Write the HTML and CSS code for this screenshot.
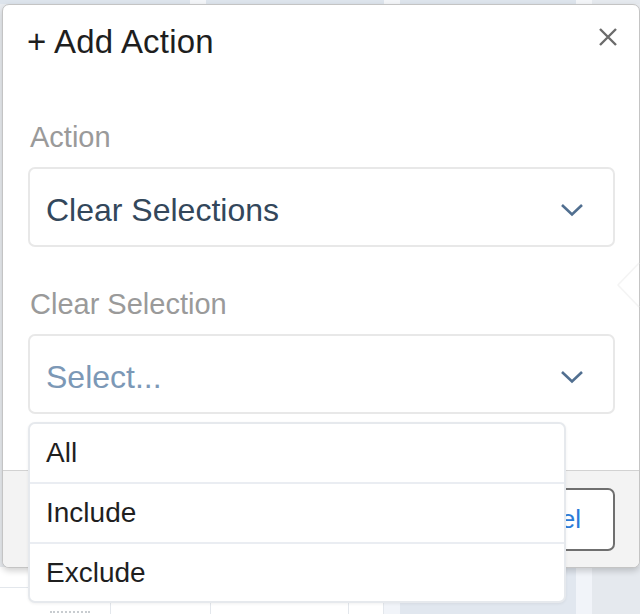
FILE: index.html
```html
<!DOCTYPE html>
<html>
<head>
<meta charset="utf-8">
<link rel="stylesheet" href="styles.css">
</head>
<body>
<div class="page">
  <div class="strip-top">
    <div class="c-a"></div><div class="c-gap"></div><div class="c-a"></div><div class="c-gap"></div><div class="c-a"></div><div class="c-gap"></div><div class="c-end"></div>
  </div>
  <div class="middle"></div>
  <div class="strip-bottom">
    <div class="table">
      <div class="t-blank"></div>
      <div class="t-row">
        <div class="t-cell"><span class="dash"></span></div>
        <div class="t-cell"></div>
        <div class="t-cell"></div>
        <div class="t-cell"></div>
      </div>
    </div>
    <div class="c-gap2"></div>
    <div class="c-blue"></div>
    <div class="c-gap2"></div>
    <div class="c-end"></div>
  </div>
</div>

<div class="dialog">
  <div class="header">
    <h1 class="title">+ Add Action</h1>
    <svg class="close" width="20" height="20" viewBox="0 0 20 20"><path d="M2 2 L18 18 M18 2 L2 18" stroke="#6b6b6b" stroke-width="2.4" fill="none"/></svg>
  </div>
  <div class="body">
    <div class="label">Action</div>
    <div class="select">
      <span class="value">Clear Selections</span>
      <svg class="chev" width="24" height="14" viewBox="0 0 24 14"><path d="M2 2 L12 11.5 L22 2" stroke="#516f90" stroke-width="2.6" fill="none"/></svg>
    </div>
    <div class="label label-2">Clear Selection</div>
    <div class="select">
      <span class="placeholder">Select...</span>
      <svg class="chev" width="24" height="14" viewBox="0 0 24 14"><path d="M2 2 L12 11.5 L22 2" stroke="#516f90" stroke-width="2.6" fill="none"/></svg>
    </div>
  </div>
  <div class="footer">
    <button class="btn">Cancel</button>
  </div>
  <svg class="arrow" width="24" height="46" viewBox="0 0 24 46"><path d="M23 1 L2 23 L23 45" stroke="#f4f4f4" stroke-width="1.5" fill="none"/></svg>
  <ul class="menu">
    <li class="item">All</li>
    <li class="item">Include</li>
    <li class="item">Exclude</li>
  </ul>
</div>
</body>
</html>
```
FILE: styles.css
```css
html, body {
  margin: 0;
  padding: 0;
}
body {
  width: 640px;
  height: 614px;
  overflow: hidden;
  font-family: "Liberation Sans", Arial, sans-serif;
  position: relative;
}
.page {
  display: grid;
  grid-template-rows: 4px 1fr 47px;
  height: 614px;
  background: #e9ecf0;
}
.strip-top {
  display: grid;
  grid-template-columns: 190px 16px 178px 16px 176px 16px 1fr;
}
.c-a { background: #dde4ec; }
.c-gap { background: #f3f5f8; }
.c-end { background: #e5e9ee; }
.middle { background: #e9ecf0; }
.strip-bottom {
  display: grid;
  grid-template-columns: 384px 16px 176px 16px 1fr;
}
.table {
  background: #fff;
  display: flex;
  flex-direction: column;
}
.t-blank {
  height: 20px;
  border-bottom: 1px solid #e3e7ec;
}
.t-row {
  flex: 1;
  display: grid;
  grid-template-columns: 111px 100px 138px 1fr;
}
.t-cell {
  border-right: 1px solid #e3e7ec;
}
.dash {
  display: block;
  width: 40px;
  margin: 23px 0 0 50px;
  border-top: 2px dotted #c8ccd0;
}
.c-gap2 { background: #f1f4f9; }
.c-blue { background: #e1e7ef; }

.dialog {
  position: absolute;
  left: 2px;
  top: 4px;
  width: 638px;
  height: 564px;
  box-sizing: border-box;
  border: 1px solid #c4c4c4;
  border-radius: 7px;
  background: #fff;
  box-shadow: 0 3px 6px rgba(0, 0, 0, 0.18);
  display: flex;
  flex-direction: column;
}
.header {
  display: flex;
  justify-content: space-between;
  align-items: flex-start;
  padding: 17px 21px 0 24px;
}
.title {
  margin: 0;
  font-size: 33px;
  font-weight: normal;
  line-height: 40px;
  letter-spacing: 0.2px;
  color: #1e1e1e;
}
.close {
  margin-top: 5px;
  display: block;
}
.body {
  padding: 0 24px 56px 25px;
  display: flex;
  flex-direction: column;
}
.label {
  margin-top: 59px;
  padding-left: 2px;
  font-size: 29px;
  line-height: 32px;
  color: #9a9a9a;
}
.label-2 { margin-top: 41px; }
.select {
  margin-top: 14px;
  height: 80px;
  box-sizing: border-box;
  border: 2px solid #e8e8e8;
  border-radius: 7px;
  display: flex;
  align-items: center;
  justify-content: space-between;
  padding: 5px 29px 0 16px;
  font-size: 32px;
  line-height: 40px;
}
.value { color: #33475b; }
.placeholder { color: #7c98b6; }
.chev { display: block; }
.footer {
  flex: 1;
  border-top: 1px solid #d2d2d2;
  background: #f3f3f3;
  border-radius: 0 0 6px 6px;
  display: flex;
  justify-content: flex-end;
  align-items: flex-start;
  padding: 17px 24px 0 0;
}
.btn {
  height: 63px;
  padding: 0 32px;
  border: 2px solid #6f6f6f;
  border-radius: 7px;
  background: #fff;
  color: #2b7bd8;
  font-family: "Liberation Sans", Arial, sans-serif;
  font-size: 26px;
}
.arrow {
  position: absolute;
  left: 613px;
  top: 257px;
}
.menu {
  position: absolute;
  left: 25px;
  top: 417px;
  width: 538px;
  margin: 0;
  padding: 0;
  list-style: none;
  box-sizing: border-box;
  border: 2px solid #e6e9ed;
  border-radius: 7px;
  background: #fff;
  box-shadow: 0 1px 3px rgba(0, 0, 0, 0.06);
}
.item {
  height: 58px;
  line-height: 58px;
  padding-left: 16px;
  font-size: 28px;
  color: #1f1f1f;
  border-top: 2px solid #eaedf2;
}
.item:first-child { border-top: none; }
.item:last-child { height: 57px; line-height: 57px; }
```
